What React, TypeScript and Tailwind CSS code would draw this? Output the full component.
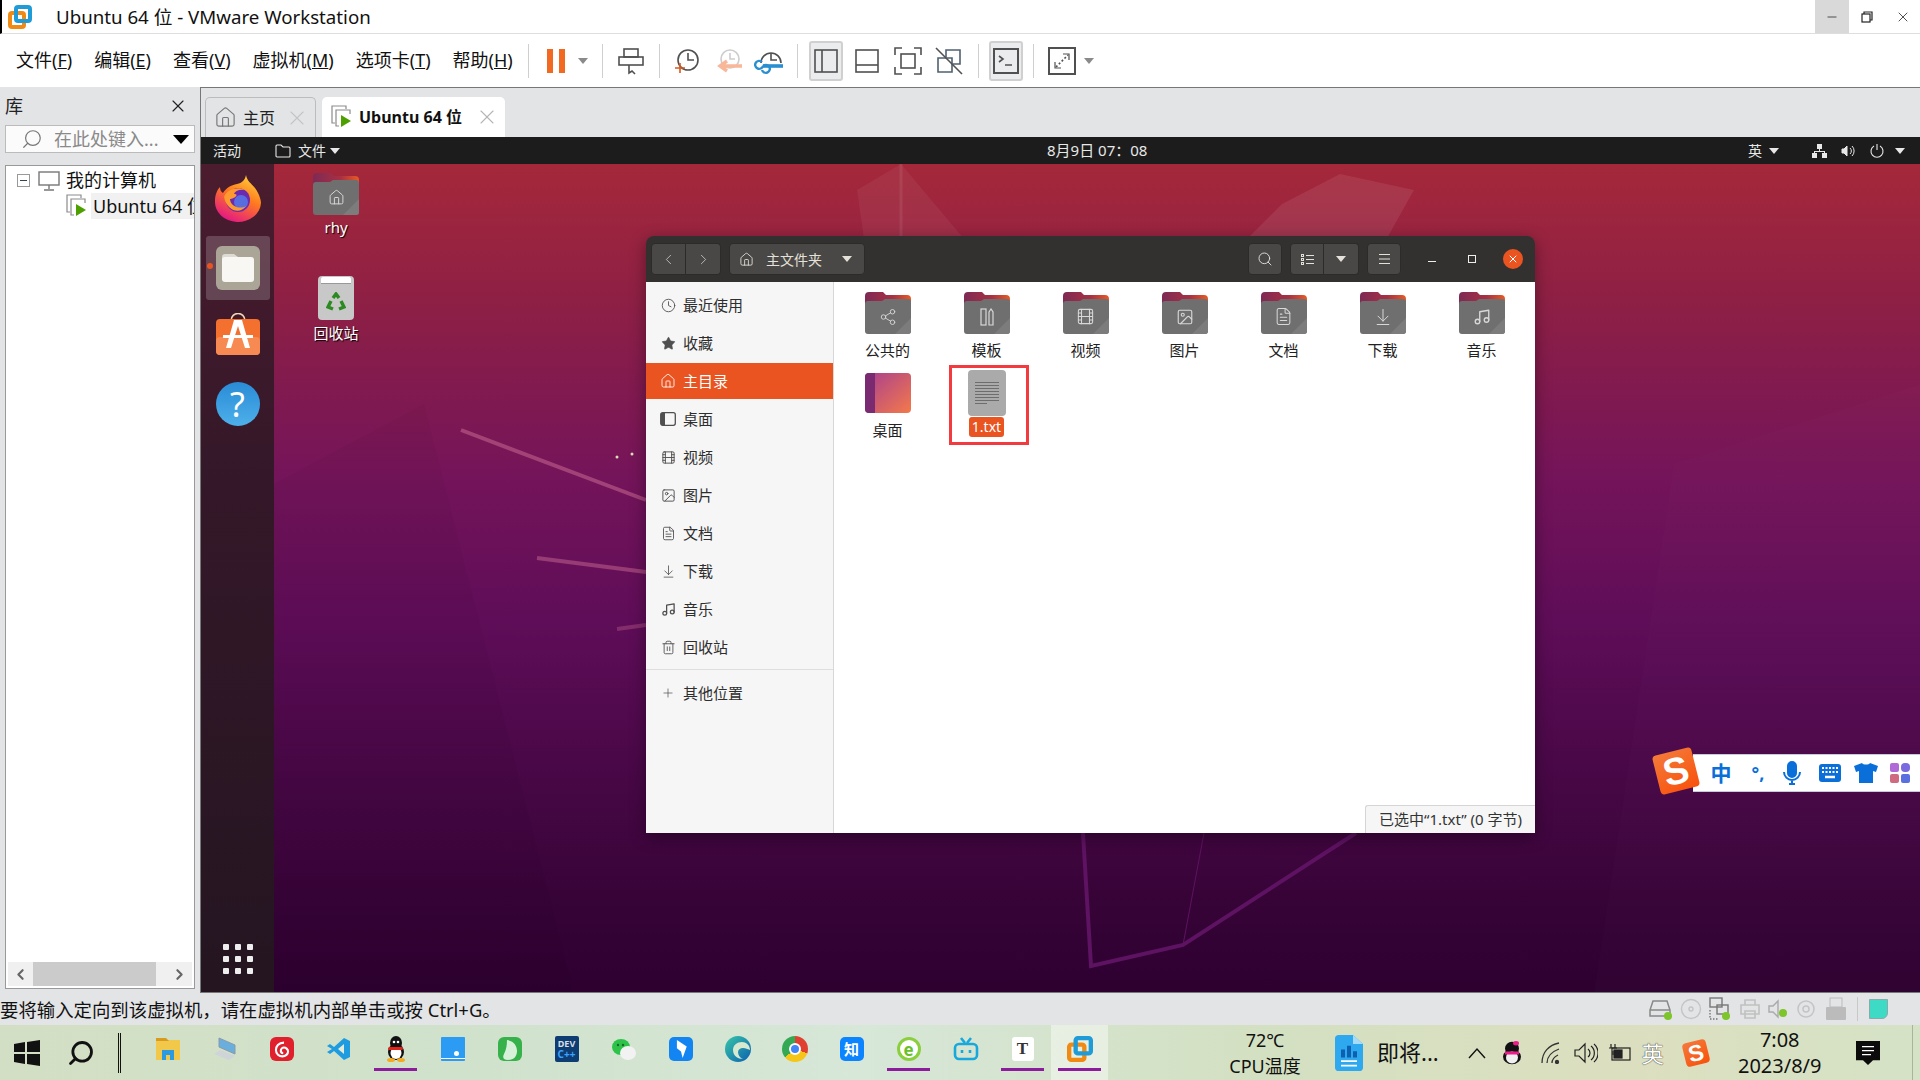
import type { ReactNode } from "react"
import {
  ArrowDownToLine,
  ChevronLeft,
  ChevronRight,
  Clock,
  Film,
  FileText,
  Home,
  Image,
  Minus,
  Music,
  Plus,
  Search,
  Share2,
  Star,
  Trash2,
  X,
} from "lucide-react"

const fontStack = "[font-family:'Noto_Sans','Noto_Sans_CJK_SC',sans-serif]"

const menus = [
  { label: "文件", key: "F" },
  { label: "编辑", key: "E" },
  { label: "查看", key: "V" },
  { label: "虚拟机", key: "M" },
  { label: "选项卡", key: "T" },
  { label: "帮助", key: "H" },
]

const places = [
  { name: "最近使用", icon: <Clock size={15} strokeWidth={1.4} /> },
  { name: "收藏", icon: <Star size={15} fill="currentColor" strokeWidth={1} /> },
  { name: "主目录", icon: <Home size={16} strokeWidth={1.3} />, active: true },
  { name: "桌面", icon: <DesktopGlyph /> },
  { name: "视频", icon: <Film size={15} strokeWidth={1.5} /> },
  { name: "图片", icon: <Image size={15} strokeWidth={1.5} /> },
  { name: "文档", icon: <FileText size={15} strokeWidth={1.4} /> },
  { name: "下载", icon: <ArrowDownToLine size={15} strokeWidth={1.3} /> },
  { name: "音乐", icon: <Music size={15} strokeWidth={2} /> },
  { name: "回收站", icon: <Trash2 size={15} strokeWidth={1.4} /> },
]

const folders = [
  { name: "公共的", icon: <Share2 size={18} strokeWidth={1.2} /> },
  { name: "模板", icon: <TemplateGlyph /> },
  { name: "视频", icon: <Film size={19} strokeWidth={1.3} /> },
  { name: "图片", icon: <Image size={18} strokeWidth={1.5} /> },
  { name: "文档", icon: <FileText size={19} strokeWidth={1.3} /> },
  { name: "下载", icon: <ArrowDownToLine size={20} strokeWidth={1.2} /> },
  { name: "音乐", icon: <Music size={18} strokeWidth={1.8} /> },
]

function DesktopGlyph() {
  return (
    <svg width="16" height="14" viewBox="0 0 16 14">
      <rect x="0.7" y="0.7" width="14.6" height="12.6" rx="2" fill="none" stroke="currentColor" strokeWidth="1.3" />
      <rect x="1" y="1" width="4" height="12" fill="currentColor" />
    </svg>
  )
}

function TemplateGlyph() {
  return (
    <svg width="14" height="18" viewBox="0 0 14 18" fill="none" stroke="currentColor" strokeWidth="1.2">
      <rect x="1" y="1" width="5" height="16" />
      <path d="M9 4l2-3 2 3v13H9z" />
    </svg>
  )
}

function Caret({ className = "" }: { className?: string }) {
  return <div className={`h-0 w-0 border-x-[5px] border-t-[6px] border-x-transparent ${className}`} />
}

function VmwareLogo({ size = 24 }: { size?: number }) {
  return (
    <svg width={size} height={size} viewBox="0 0 24 24" fill="none" strokeWidth="4">
      <rect x="2" y="8" width="14" height="14" rx="2" stroke="#f08a12" />
      <rect x="8" y="2" width="14" height="14" rx="2" stroke="#1f9bd8" />
    </svg>
  )
}

function VmRunningIcon() {
  return (
    <svg width="22" height="24" viewBox="0 0 22 24" fill="none" stroke="#8b8b8b" strokeWidth="1.2">
      <path d="M4 18H1V1h14v3" />
      <path d="M8 21H5V5h14v4" />
      <path d="M10 10l10 6-10 6z" fill="#4ea000" stroke="none" />
    </svg>
  )
}

function ToolIcon({ children, w = 32, h = 32 }: { children: ReactNode; w?: number; h?: number }) {
  return (
    <svg width={w} height={h} viewBox={`0 0 ${w} ${h}`} fill="none" stroke="#505050" strokeWidth="1.6">
      {children}
    </svg>
  )
}

function ToolDivider({ ml }: { ml: string }) {
  return <div className={`h-[34px] w-px bg-[#cfcfcf] ${ml}`} />
}

function TitleBar() {
  return (
    <div className="flex h-[34px] shrink-0 items-center border-b border-l-2 border-[#dedede] border-l-black bg-white">
      <div className="ml-[6px]">
        <VmwareLogo />
      </div>
      <span className="ml-[24px] pt-[1px] text-[18.7px] text-[#111]">Ubuntu 64 位 - VMware Workstation</span>
      <div className="ml-auto flex h-full items-center text-[#222]">
        <div className="flex h-full w-[34px] items-center justify-center bg-[#d9d9d9]">
          <Minus size={14} strokeWidth={1.3} />
        </div>
        <div className="flex h-full w-[36px] items-center justify-center">
          <svg width="12" height="12" viewBox="0 0 12 12" fill="none" stroke="#222" strokeWidth="1.2">
            <rect x="1" y="3" width="8" height="8" />
            <path d="M3 3V1h8v8H9" />
          </svg>
        </div>
        <div className="flex h-full w-[35px] items-center justify-center">
          <X size={16} strokeWidth={1.2} />
        </div>
      </div>
    </div>
  )
}

function Toolbar() {
  return (
    <div className="flex h-[53px] shrink-0 items-center bg-white">
      <div className="flex w-[528px] gap-[22px] pl-[16px] text-[18px] text-[#111]">
        {menus.map((m) => (
          <span key={m.key}>
            {m.label}(<span className="underline">{m.key}</span>)
          </span>
        ))}
      </div>
      <ToolDivider ml="" />
      <div className="ml-[18px] flex h-[24px] w-[18px] justify-between">
        <div className="w-[6px] bg-[#f26a21]" />
        <div className="w-[6px] bg-[#f26a21]" />
      </div>
      <Caret className="ml-[13px] border-t-[#8a8a8a]" />
      <ToolDivider ml="ml-[14px]" />
      <div className="ml-[12px]">
        <ToolIcon>
          <rect x="9" y="4" width="14" height="8" />
          <rect x="4" y="12" width="24" height="8" />
          <path d="M14 20v8l3-2 3 3" />
        </ToolIcon>
      </div>
      <ToolDivider ml="ml-[12px]" />
      <div className="ml-[11px]">
        <ToolIcon>
          <circle cx="17" cy="15" r="10" />
          <path d="M17 8v7h6" />
          <path d="M4 23h10M9 18v10" stroke="#d9581f" />
        </ToolIcon>
      </div>
      <div className="ml-[10px] opacity-90">
        <ToolIcon>
          <circle cx="17" cy="14" r="9" stroke="#c8c8c8" />
          <path d="M17 8v6h5" stroke="#c8c8c8" />
          <path d="M29 21H9m5-5l-7 5 7 5" stroke="#f9b08e" strokeWidth="3.4" />
        </ToolIcon>
      </div>
      <div className="ml-[9px]">
        <ToolIcon>
          <path d="M7 18a10 10 0 1 1 20 0" />
          <path d="M17 8v7h6" />
          <path d="M9 21h20" stroke="#2a8fd0" strokeWidth="3.6" />
          <path d="M9 21a4 4 0 1 1-1-4M9 21a4 4 0 1 1-1 4" stroke="#2a8fd0" strokeWidth="2.4" />
        </ToolIcon>
      </div>
      <ToolDivider ml="ml-[11px]" />
      <div className="ml-[11px] flex h-[40px] w-[34px] items-center justify-center rounded-[3px] border-2 border-[#d0d0d0] bg-[#ebecee]">
        <ToolIcon w={24} h={24}>
          <rect x="1" y="1" width="22" height="22" />
          <path d="M8 1v22" />
        </ToolIcon>
      </div>
      <div className="ml-[12px]">
        <ToolIcon w={24} h={24}>
          <rect x="1" y="1" width="22" height="22" />
          <path d="M1 16h22" />
        </ToolIcon>
      </div>
      <div className="ml-[15px]">
        <ToolIcon w={28} h={28}>
          <path d="M1 8V1h7M20 1h7v7M27 20v7h-7M8 27H1v-7" />
          <rect x="7" y="7" width="14" height="14" />
        </ToolIcon>
      </div>
      <div className="ml-[13px]">
        <ToolIcon w={28} h={28}>
          <path d="M11 10V3h14v14h-7M3 11h14v14H3z" stroke="#506070" />
          <path d="M1 1l26 26" />
        </ToolIcon>
      </div>
      <ToolDivider ml="ml-[15px]" />
      <div className="ml-[10px] flex h-[40px] w-[34px] items-center justify-center rounded-[3px] border-2 border-[#d0d0d0] bg-[#ebecee]">
        <ToolIcon w={26} h={26}>
          <rect x="1" y="1" width="24" height="24" strokeWidth="2" />
          <path d="M6 8l4 3-4 3M12 17h7" />
        </ToolIcon>
      </div>
      <ToolDivider ml="ml-[10px]" />
      <div className="ml-[14px]">
        <ToolIcon w={28} h={28}>
          <rect x="1" y="1" width="26" height="26" strokeWidth="2" />
          <path d="M8 20l12-12" strokeDasharray="2 2" />
          <path d="M15 7h6v6M7 15v6h6" strokeWidth="1.2" />
        </ToolIcon>
      </div>
      <Caret className="ml-[8px] border-t-[#8a8a8a]" />
    </div>
  )
}

function Library() {
  return (
    <div className="flex w-[200px] shrink-0 flex-col px-[5px] pb-[4px]">
      <div className="flex h-[38px] shrink-0 items-center justify-between pr-[7px] text-[18px] text-[#222]">
        <span>库</span>
        <X size={20} strokeWidth={1.4} />
      </div>
      <div className="flex h-[28px] shrink-0 items-center border border-[#bbb] bg-[#fbfbfb]">
        <Search size={22} strokeWidth={1.3} className="ml-[15px] -scale-x-100 text-[#777]" />
        <span className="ml-[11px] whitespace-nowrap text-[18px] text-[#8a8a8a]">在此处键入...</span>
        <Caret className="ml-auto mr-[5px] border-x-[8px] border-t-[9px] border-t-black" />
      </div>
      <div className="mt-[12px] flex flex-1 flex-col border border-[#999] bg-white">
        <div className="flex h-[28px] items-center pl-[11px] pt-[1px]">
          <div className="flex h-[13px] w-[13px] items-center justify-center border border-[#999]">
            <div className="h-px w-[7px] bg-[#345]" />
          </div>
          <svg className="ml-[7px]" width="24" height="22" viewBox="0 0 24 22" fill="none" stroke="#777" strokeWidth="1.4">
            <rect x="2" y="2" width="20" height="13" />
            <path d="M12 15v4M7 20h10" />
          </svg>
          <span className="ml-[5px] text-[18px] text-[#111]">我的计算机</span>
        </div>
        <div className="-mt-[1px] flex h-[26px] items-center pl-[60px]">
          <VmRunningIcon />
          <div className="ml-[3px] flex-1 overflow-hidden whitespace-nowrap bg-[#f1f1f1] pl-[2px] text-[18px] leading-[26px] text-[#111]">
            Ubuntu 64 位
          </div>
        </div>
        <div className="mx-[2px] mb-[2px] mt-auto flex h-[24px] items-center bg-[#f0f0f0]">
          <ChevronLeft size={17} strokeWidth={3} className="ml-[4px] text-[#666]" />
          <div className="ml-[4px] h-full w-[123px] bg-[#cbcbcb]" />
          <ChevronRight size={17} strokeWidth={3} className="ml-[15px] text-[#666]" />
        </div>
      </div>
    </div>
  )
}

function TabsRow() {
  return (
    <div className="flex h-[49px] shrink-0 items-end pl-[4px]">
      <div className="flex h-[40px] w-[111px] items-center rounded-t-[5px] border border-b-0 border-[#bcbcbc] text-[16px] text-[#222]">
        <Home size={23} strokeWidth={1.2} className="ml-[8px] text-[#777]" />
        <span className="ml-[6px]">主页</span>
        <X size={24} strokeWidth={1.1} className="ml-auto mr-[6px] text-[#c4c4c4]" />
      </div>
      <div className="ml-[6px] flex h-[40px] w-[183px] items-center rounded-t-[5px] bg-white text-[16px] font-bold text-[#111]">
        <div className="ml-[9px]">
          <VmRunningIcon />
        </div>
        <span className="ml-[6px]">Ubuntu 64 位</span>
        <X size={24} strokeWidth={1.1} className="ml-auto mr-[6px] text-[#b5b5b5]" />
      </div>
    </div>
  )
}

function GnomeBar() {
  return (
    <div className="flex h-[27px] shrink-0 items-center bg-[#1c1c1c] text-[14px] text-[#e8e8e8]">
      <span className="ml-[12px]">活动</span>
      <svg className="ml-[34px]" width="16" height="14" viewBox="0 0 16 14" fill="none" stroke="#e8e8e8" strokeWidth="1.1">
        <path d="M1 12V2a1 1 0 0 1 1-1h4l2 2h6a1 1 0 0 1 1 1v8a1 1 0 0 1-1 1H2a1 1 0 0 1-1-1z" />
      </svg>
      <span className="ml-[7px]">文件</span>
      <Caret className="ml-[4px] border-t-[#e8e8e8]" />
      <span className="ml-[707px] w-[110px] whitespace-nowrap text-[15px]">8月9日 07：08</span>
      <span className="ml-[591px]">英</span>
      <Caret className="ml-[7px] border-t-[#e8e8e8]" />
      <svg className="ml-[33px]" width="15" height="14" viewBox="0 0 15 14" fill="#e8e8e8">
        <rect x="5" y="0" width="5" height="5" />
        <rect x="0" y="9" width="5" height="5" />
        <rect x="10" y="9" width="5" height="5" />
        <path d="M7 5h1v2h5v2h-1V8H3v1H2V7h5z" />
      </svg>
      <svg className="ml-[14px]" width="14" height="14" viewBox="0 0 14 14" fill="none" stroke="#e8e8e8">
        <path d="M1 5h2l3-3v10l-3-3H1z" fill="#e8e8e8" />
        <path d="M9 4a4 4 0 0 1 0 6M11 2a7 7 0 0 1 0 10" />
      </svg>
      <svg className="ml-[15px]" width="14" height="15" viewBox="0 0 14 15" fill="none" stroke="#e8e8e8" strokeWidth="1.1">
        <path d="M7 1v6M4 3a6 6 0 1 0 6 0" />
      </svg>
      <Caret className="ml-[11px] border-t-[#e8e8e8]" />
    </div>
  )
}

function FirefoxIcon() {
  return (
    <svg width="46" height="48" viewBox="0 0 46 48">
      <defs>
        <linearGradient id="ff" x1="0.8" y1="0" x2="0.3" y2="1">
          <stop offset="0" stopColor="#ffd43a" />
          <stop offset="0.45" stopColor="#ff7a1f" />
          <stop offset="1" stopColor="#e31587" />
        </linearGradient>
      </defs>
      <path d="M31 0c1 6 5 8 9 13 5 7 6 13 6 15a23 20 0 1 1-46-2c0-6 2-11 5-14 0 3 1 5 3 6 3-5 8-8 14-9 5-1 8-4 9-9z" fill="url(#ff)" />
      <circle cx="23" cy="25" r="12" fill="#6b2bb0" />
      <circle cx="26" cy="27" r="7" fill="#5a6de0" />
      <path d="M9 22c3-8 14-11 21-7-6-1-10 1-11 4 6 0 0 5-4 5 0 7 10 11 16 7-6 9-19 5-22-9z" fill="#ff9a2e" />
    </svg>
  )
}

function FilesIcon() {
  return (
    <svg width="44" height="44" viewBox="0 0 44 44">
      <rect width="44" height="44" rx="6" fill="#aaa597" />
      <path d="M6 11a3 3 0 0 1 3-3h9l4 3v6H6z" fill="#dedbd2" />
      <rect x="6" y="11" width="32" height="25" rx="3" fill="#f8f7f4" />
    </svg>
  )
}

function SoftwareIcon() {
  return (
    <svg width="44" height="42" viewBox="0 0 44 42">
      <path d="M15 8c0-10 14-10 14 0" fill="none" stroke="#f0d8b8" strokeWidth="1.6" />
      <rect y="6" width="44" height="36" rx="4" fill="#f4702e" />
      <rect y="24" width="44" height="18" rx="4" fill="#f68a52" />
      <path d="M18 7h8l8 28h-5L22 13l-7 22h-5z" fill="#fff" />
      <rect x="7" y="22" width="30" height="3" fill="#fff" />
    </svg>
  )
}

function Dock() {
  return (
    <div className="flex w-[73px] shrink-0 flex-col items-center bg-[linear-gradient(180deg,#4b1c2e_0%,#351829_35%,#241521_100%)] pt-[11px]">
      <div className="flex h-[61px] items-start">
        <FirefoxIcon />
      </div>
      <div className="relative flex h-[64px] w-[64px] items-center justify-center rounded-[3px] bg-[#ffffff30]">
        <FilesIcon />
        <div className="absolute left-[1px] top-[27px] h-[6px] w-[6px] rounded-full bg-[#e95420]" />
      </div>
      <div className="mt-[13px]">
        <SoftwareIcon />
      </div>
      <div className="mt-[27px] flex h-[44px] w-[44px] items-center justify-center rounded-full bg-[linear-gradient(180deg,#2a8bd6,#4db0ea)] text-[34px] text-white">
        ?
      </div>
      <div className="mb-[18px] mt-auto grid grid-cols-3 gap-[6px]">
        {Array.from({ length: 9 }).map((_, i) => (
          <div key={i} className="h-[6px] w-[6px] rounded-[1px] bg-[#eeeeee]" />
        ))}
      </div>
    </div>
  )
}

function FolderIcon({ children, tint = "text-[#d8d8d8]" }: { children?: ReactNode; tint?: string }) {
  return (
    <div className={`relative h-[42px] w-[46px] ${tint}`}>
      <svg width="46" height="42" viewBox="0 0 46 42" className="absolute left-0 top-0">
        <defs>
          <linearGradient id="tab" x1="0" y1="0" x2="1" y2="0">
            <stop offset="0" stopColor="#7d2a55" />
            <stop offset="0.6" stopColor="#a83043" />
            <stop offset="1" stopColor="#e85a24" />
          </linearGradient>
        </defs>
        <path d="M0 14V4a4 4 0 0 1 4-4h14l3 3h21a4 4 0 0 1 4 4v10z" fill="url(#tab)" />
        <path d="M0 12a3 3 0 0 1 3-3h14l3-2h23a3 3 0 0 1 3 3v29a3 3 0 0 1-3 3H3a3 3 0 0 1-3-3z" fill="#6f6f6f" />
        <path d="M46 26v13a3 3 0 0 1-3 3H30z" fill="#7c7c7c" />
      </svg>
      <div className="absolute inset-x-0 bottom-0 top-[7px] flex items-center justify-center">{children}</div>
    </div>
  )
}

function DesktopFolderIcon() {
  return (
    <svg width="46" height="42" viewBox="0 0 46 42">
      <defs>
        <linearGradient id="desk" x1="0" y1="0" x2="1" y2="1">
          <stop offset="0" stopColor="#a83f8f" />
          <stop offset="1" stopColor="#f4794a" />
        </linearGradient>
      </defs>
      <rect y="1" width="46" height="40" rx="4" fill="url(#desk)" />
      <path d="M4 1h6v40H4a4 4 0 0 1-4-4V5a4 4 0 0 1 4-4z" fill="#7a2a70" />
    </svg>
  )
}

function TextFileIcon() {
  return (
    <div className="-mt-[2px] flex h-[46px] w-[38px] flex-col items-center justify-center gap-[2px] rounded-[4px] bg-[#aaaaaa]">
      {[24, 24, 24, 24, 24, 24, 24, 12].map((w, i) => (
        <div key={i} className={`h-px w-[24px] bg-[#6d6d6d] ${w === 12 ? "mr-[12px] !w-[12px]" : ""}`} />
      ))}
    </div>
  )
}

function HeaderButton({ children, className = "" }: { children: ReactNode; className?: string }) {
  return (
    <div className={`flex h-[32px] items-center justify-center border border-[#2c2b2a] bg-[#4a4846] text-[#e4e1da] ${className}`}>
      {children}
    </div>
  )
}

function FilesWindow() {
  return (
    <div className="absolute left-[372px] top-[72px] flex h-[597px] w-[889px] flex-col overflow-hidden rounded-t-[8px] shadow-[0_4px_16px_#00000060]">
      <div className="flex h-[46px] shrink-0 items-center bg-[#333130] pl-[5px] text-[#e4e1da]">
        <HeaderButton className="w-[35px] rounded-l-[4px] text-[#8c8a87]">
          <ChevronLeft size={17} strokeWidth={1} />
        </HeaderButton>
        <HeaderButton className="w-[35px] rounded-r-[4px] border-l-0 text-[#8c8a87]">
          <ChevronRight size={17} strokeWidth={1} />
        </HeaderButton>
        <HeaderButton className="ml-[8px] w-[136px] justify-start rounded-[4px] text-[14px]">
          <Home size={15} strokeWidth={1.4} className="ml-[9px]" />
          <span className="ml-[12px]">主文件夹</span>
          <Caret className="ml-[20px] border-t-[#e4e1da]" />
        </HeaderButton>
        <HeaderButton className="ml-[383px] w-[34px] rounded-[4px]">
          <Search size={16} strokeWidth={1.4} />
        </HeaderButton>
        <HeaderButton className="ml-[8px] w-[34px] rounded-l-[4px]">
          <svg width="13" height="11" viewBox="0 0 13 11" fill="none" stroke="#e4e1da">
            <path d="M5 1.5h8M5 5.5h8M5 9.5h8" />
            <rect x="0.5" y="0.5" width="2" height="2" />
            <rect x="0.5" y="4.5" width="2" height="2" />
            <rect x="0.5" y="8.5" width="2" height="2" />
          </svg>
        </HeaderButton>
        <HeaderButton className="w-[35px] rounded-r-[4px] border-l-0">
          <Caret className="border-t-[#e4e1da]" />
        </HeaderButton>
        <HeaderButton className="ml-[8px] w-[34px] rounded-[4px]">
          <svg width="11" height="10" viewBox="0 0 11 10" stroke="#e4e1da">
            <path d="M0 0.5h11M0 5h11M0 9.5h11" />
          </svg>
        </HeaderButton>
        <div className="ml-[27px] mt-[5px] h-px w-[8px] bg-[#eee]" />
        <div className="ml-[32px] h-[8px] w-[8px] border border-[#eee]" />
        <div className="ml-[27px] flex h-[20px] w-[20px] items-center justify-center rounded-full bg-[#e95420] text-white">
          <X size={12} strokeWidth={2} />
        </div>
      </div>
      <div className="relative flex min-h-0 flex-1 bg-white">
        <div className="flex w-[188px] shrink-0 flex-col border-r border-[#d8d8d8] bg-[#f6f6f6] pt-[4px] text-[15px] text-[#2e2e2e]">
          {places.map((p) => (
            <div key={p.name} className="h-[38px] py-px">
              <div className={`flex h-[36px] items-center ${p.active ? "bg-[#e95420] text-white" : ""}`}>
                <div className={`flex w-[37px] justify-center pl-[7px] ${p.active ? "" : "text-[#4f4f4f]"}`}>{p.icon}</div>
                <span>{p.name}</span>
              </div>
            </div>
          ))}
          <div className="mt-[3px] flex h-[43px] items-center border-t border-[#dedede] pt-[4px]">
            <div className="flex w-[37px] justify-center pl-[7px] text-[#4f4f4f]">
              <Plus size={14} strokeWidth={1.2} />
            </div>
            <span>其他位置</span>
          </div>
        </div>
        <div className="grid flex-1 grid-cols-[repeat(7,99px)] content-start pl-[4px] pt-[10px] text-[15px] text-[#222]">
          {folders.map((f) => (
            <div key={f.name} className="flex h-[80px] flex-col items-center">
              <FolderIcon>{f.icon}</FolderIcon>
              <span className="mt-[6px] leading-[20px]">{f.name}</span>
            </div>
          ))}
          <div className="flex h-[80px] flex-col items-center">
            <DesktopFolderIcon />
            <span className="mt-[6px] leading-[20px]">桌面</span>
          </div>
          <div className="relative flex h-[80px] flex-col items-center">
            <TextFileIcon />
            <span className="mt-[1px] rounded-[3px] bg-[#e95420] px-[3px] text-[14px] leading-[20px] text-white">1.txt</span>
            <div className="absolute left-[12px] top-[-7px] h-[80px] w-[80px] border-[3px] border-[#f33a3f]" />
          </div>
        </div>
        <div className="absolute bottom-0 right-0 flex h-[28px] w-[170px] items-center justify-center whitespace-nowrap rounded-tl-[3px] border-l border-t border-[#d5d5d5] bg-[#f6f6f6] text-[15px] text-[#333]">
          已选中“1.txt” (0 字节)
        </div>
      </div>
    </div>
  )
}

function WallpaperArt() {
  return (
    <svg className="absolute inset-0" width="1647" height="830" viewBox="0 0 1647 830" fill="none">
      <path d="M583 26L627 0 690 75H590z" fill="#ffffff0d" />
      <path d="M627 0v75" stroke="#ffffff14" strokeWidth="3" />
      <path d="M1066 10l74 16-28 50H972l36-36z" fill="#ffffff14" />
      <path d="M0 320L150 240 300 830H0z" fill="#00000008" />
      <path d="M1400 300l247-80v610H1320z" fill="#ffffff03" />
      <path d="M187 266L372 336" stroke="#c0608c" strokeOpacity="0.6" strokeWidth="4" />
      <path d="M263 394L372 408" stroke="#c0608c" strokeOpacity="0.55" strokeWidth="4" />
      <path d="M343 465L372 461" stroke="#c0608c" strokeOpacity="0.4" strokeWidth="4" />
      <circle cx="343" cy="293" r="1.5" fill="#ddb" />
      <circle cx="358" cy="290" r="1.5" fill="#ddb" />
      <path d="M809 669l8 133 92-21L1082 669" stroke="#5e1262" strokeWidth="4" />
      <path d="M930 669l-21 112" stroke="#5e1262" strokeWidth="1" />
    </svg>
  )
}

function DesktopIcons() {
  return (
    <div className="absolute left-[29px] top-[9px] flex w-[66px] flex-col items-center text-[15px] text-white [text-shadow:1px_1px_1px_#000]">
      <FolderIcon>
        <Home size={17} strokeWidth={1.4} />
      </FolderIcon>
      <span className="mt-[2px] leading-[20px]">rhy</span>
      <div className="relative mt-[39px] flex h-[44px] w-[36px] items-center justify-center rounded-[4px] bg-[#c8c8c8]">
        <div className="absolute inset-x-[3px] top-[1px] h-[7px] rounded-t-[2px] border-b border-[#999] bg-white" />
        <svg width="20" height="20" viewBox="0 0 20 20" fill="none" stroke="#2c8a22" strokeWidth="3.4" className="mt-[8px]">
          <path d="M7 6l3-4 3 4M15 9l3 6-5 2M5 9l-3 6 5 2" />
        </svg>
      </div>
      <span className="mt-[3px] leading-[20px]">回收站</span>
    </div>
  )
}

function SogouLogo({ size }: { size: number }) {
  return (
    <div
      className="flex rotate-[-14deg] items-center justify-center rounded-[4px] bg-[linear-gradient(160deg,#f47a3a,#f8510c)] font-bold text-white [font-family:'Liberation_Sans',sans-serif]"
      style={{ width: size, height: size, fontSize: size * 0.95 }}
    >
      S
    </div>
  )
}

function SogouBar() {
  const blue = "#0a6fd8"
  return (
    <div className="absolute bottom-[200px] right-0 flex h-[38px] w-[227px] items-center border-y border-[#c6cce0] bg-white">
      <div className="absolute -left-[37px] top-[-4px]">
        <SogouLogo size={40} />
      </div>
      <span className="ml-[17px] w-[22px] text-center text-[21px] font-bold leading-none text-[#0a6fd8]">中</span>
      <span className="ml-[15px] w-[22px] text-center text-[18px] font-bold leading-none text-[#0a6fd8]">°,</span>
      <svg className="ml-[13px]" width="20" height="24" viewBox="0 0 20 24" fill="none" stroke={blue} strokeWidth="2">
        <rect x="6" y="1" width="8" height="15" rx="4" fill={blue} />
        <path d="M2 11a8 8 0 0 0 16 0M10 19v3M7 23h6" />
      </svg>
      <svg className="ml-[17px]" width="22" height="18" viewBox="0 0 22 18">
        <rect width="22" height="18" rx="3" fill={blue} />
        <path d="M3 4h16M3 8h16" stroke="#fff" strokeWidth="2" strokeDasharray="2 1.5" />
        <path d="M6 13h10" stroke="#fff" strokeWidth="2.5" />
      </svg>
      <svg className="ml-[13px]" width="24" height="20" viewBox="0 0 24 20" fill={blue}>
        <path d="M8 0c1 2 7 2 8 0l8 3-2 6-3-1v12H5V8L2 9 0 3z" />
      </svg>
      <svg className="ml-[12px]" width="20" height="20" viewBox="0 0 20 20">
        <rect width="9" height="9" rx="2" fill="#b06ad8" />
        <rect x="11" width="9" height="9" rx="4" fill="#7a6ae0" />
        <rect y="11" width="9" height="9" rx="2" fill="#d06a80" />
        <rect x="11" y="11" width="9" height="9" rx="2" fill="#5a70e0" />
      </svg>
    </div>
  )
}

function VmPane() {
  return (
    <div className="flex min-w-0 flex-1 flex-col border-b border-l border-t border-[#777]">
      <TabsRow />
      <GnomeBar />
      <div className="flex min-h-0 flex-1">
        <Dock />
        <div className="relative flex-1 overflow-hidden bg-[linear-gradient(180deg,#a5283a_0%,#8c1f46_18%,#74145a_38%,#5f0d58_55%,#4a0848_72%,#380438_88%,#2d0030_100%)]">
          <WallpaperArt />
          <DesktopIcons />
          <FilesWindow />
          <SogouBar />
        </div>
      </div>
    </div>
  )
}

function StatusBar() {
  return (
    <div className="flex h-[32px] shrink-0 items-center text-[18.4px] text-[#111]">
      <span className="pt-[1px]">要将输入定向到该虚拟机，请在虚拟机内部单击或按 Ctrl+G。</span>
      <div className="ml-auto flex items-center">
        <svg width="24" height="22" viewBox="0 0 24 22" fill="none" stroke="#888" strokeWidth="1.5">
          <path d="M1 18V12L4 3h14l3 9v6zM1 12h20" />
          <circle cx="19" cy="18" r="4" fill="#7dc52a" stroke="none" />
        </svg>
        <svg className="ml-[7px]" width="22" height="22" viewBox="0 0 22 22" fill="none" stroke="#c4c4c4" strokeWidth="1.4">
          <circle cx="11" cy="11" r="9.5" />
          <circle cx="11" cy="11" r="2" />
        </svg>
        <svg className="ml-[7px]" width="22" height="24" viewBox="0 0 22 24" fill="none" stroke="#777" strokeWidth="1.4">
          <rect x="1" y="1" width="12" height="9" />
          <rect x="8" y="8" width="11" height="9" />
          <path d="M1 13v9h9" strokeDasharray="1.5 1.5" />
          <circle cx="17" cy="19" r="4" fill="#7dc52a" stroke="none" />
        </svg>
        <svg className="ml-[8px]" width="22" height="22" viewBox="0 0 22 22" fill="none" stroke="#c0c0c0" strokeWidth="1.6">
          <path d="M6 7V2h10v5M2 7h18v9H2zM6 13h10v7H6z" />
        </svg>
        <svg className="ml-[7px]" width="20" height="22" viewBox="0 0 20 22" fill="none" stroke="#aaa" strokeWidth="1.4">
          <path d="M1 8h4l5-5v16l-5-5H1z" />
          <circle cx="15" cy="15" r="4" fill="#7dc52a" stroke="none" />
        </svg>
        <svg className="ml-[9px]" width="18" height="22" viewBox="0 0 18 22" fill="none" stroke="#c4c4c4" strokeWidth="1.5">
          <circle cx="9" cy="11" r="8" />
          <circle cx="9" cy="11" r="3" />
        </svg>
        <svg className="ml-[10px]" width="22" height="24" viewBox="0 0 22 24">
          <rect x="5" y="1" width="12" height="9" fill="none" stroke="#bbb" />
          <rect x="1" y="10" width="20" height="13" rx="1" fill="#bbb" />
        </svg>
        <div className="ml-[10px] h-[24px] w-px bg-[#c8c8c8]" />
        <div className="ml-[11px] mr-[32px] h-[20px] w-[19px] rounded-br-[6px] border border-[#8aa] bg-[#3ddbc6]" />
      </div>
    </div>
  )
}

function TaskIcon({ children, mark, active }: { children: ReactNode; mark?: boolean; active?: boolean }) {
  return (
    <div className={`relative flex h-full w-[57px] items-center justify-center pb-[7px] ${active ? "bg-[#ffffff70]" : ""}`}>
      {children}
      {mark && <div className="absolute bottom-[9px] left-[7px] h-[3px] w-[43px] bg-[#8c1c9c]" />}
    </div>
  )
}

function TaskbarApps() {
  return (
    <div className="flex h-full items-center">
      <TaskIcon>
        <svg width="24" height="24" viewBox="0 0 24 24">
          <path d="M0 3h24v20H0z" fill="#f2c84b" />
          <path d="M0 1h10l3 3H0z" fill="#d99a20" />
          <path d="M6 13h12v10h-4v-5h-4v5H6z" fill="#2b9ae0" />
        </svg>
      </TaskIcon>
      <TaskIcon>
        <svg width="24" height="24" viewBox="0 0 24 24">
          <path d="M6 1l16 7v9L6 10z" fill="#6aaede" stroke="#8a9aa8" />
          <path d="M1 17l6-4 15 6-6 4z" fill="#cfd4d8" />
        </svg>
      </TaskIcon>
      <TaskIcon>
        <div className="flex h-[24px] w-[24px] items-center justify-center rounded-[6px] bg-[#e0202c]">
          <svg width="16" height="17" viewBox="0 0 19 21" fill="none" stroke="#fff" strokeWidth="2.6">
            <path d="M12 2C5 2 2 7 2 11c0 5 4 8 8 8s7-3 7-6-3-5-5-5-4 2-4 4 1 3 3 3" />
          </svg>
        </div>
      </TaskIcon>
      <TaskIcon>
        <svg width="24" height="24" viewBox="0 0 24 24">
          <path d="M17 1l6 3v16l-6 3L7 14l-4 3-3-2 5-3-5-3 3-2 4 3z" fill="#1f9ce0" />
          <path d="M17 7v10l-6-5z" fill="#e4ecd8" />
        </svg>
      </TaskIcon>
      <TaskIcon mark>
        <svg width="22" height="26" viewBox="0 0 22 26">
          <ellipse cx="11" cy="7" rx="6" ry="7" fill="#111" />
          <ellipse cx="11" cy="16" rx="8" ry="8" fill="#111" />
          <ellipse cx="11" cy="17" rx="5.5" ry="6" fill="#fff" />
          <rect x="3" y="11" width="15" height="3" rx="1.5" fill="#e2231a" />
          <circle cx="9" cy="6" r="1.3" fill="#fff" />
          <circle cx="13" cy="6" r="1.3" fill="#fff" />
          <ellipse cx="6" cy="24" rx="4" ry="2" fill="#f4a91f" />
          <ellipse cx="16" cy="24" rx="4" ry="2" fill="#f4a91f" />
        </svg>
      </TaskIcon>
      <TaskIcon>
        <div className="relative h-[24px] w-[24px] rounded-[1px] bg-[#2b9bf4]">
          <div className="absolute bottom-[5px] right-[6px] h-[5px] w-[5px] rounded-full bg-white" />
          <div className="absolute inset-x-0 bottom-[2px] h-px bg-white" />
        </div>
      </TaskIcon>
      <TaskIcon>
        <svg width="24" height="24" viewBox="0 0 24 24">
          <rect width="24" height="24" rx="6" fill="#37b24a" />
          <path d="M9 3c7 1 10 6 10 11s-3 9-9 9c-4 0-6-2-4-6s3-8 3-14z" fill="#d7f1d8" />
        </svg>
      </TaskIcon>
      <TaskIcon>
        <div className="flex h-[26px] w-[24px] flex-col items-center justify-center rounded-[2px] bg-[#0e3d73] font-bold leading-[11px]">
          <span className="text-[9px] text-[#d9dde4]">DEV</span>
          <span className="text-[10px] text-[#3aa3ff]">C++</span>
        </div>
      </TaskIcon>
      <TaskIcon>
        <svg width="24" height="24" viewBox="0 0 24 24">
          <ellipse cx="9" cy="10" rx="9" ry="8" fill="#2dc24a" />
          <ellipse cx="16" cy="16" rx="8" ry="7" fill="#f2f2f2" />
          <circle cx="6" cy="8" r="1.2" fill="#176b28" />
          <circle cx="11" cy="8" r="1.2" fill="#176b28" />
        </svg>
      </TaskIcon>
      <TaskIcon>
        <div className="flex h-[24px] w-[24px] items-center justify-center rounded-[5px] bg-[#1285f2]">
          <svg width="14" height="18" viewBox="0 0 14 22" fill="#fff">
            <path d="M2 0l12 8-5 14-2-8-5-4z" />
          </svg>
        </div>
      </TaskIcon>
      <TaskIcon>
        <svg width="26" height="26" viewBox="0 0 26 26">
          <defs>
            <linearGradient id="edge" x1="0" y1="0" x2="1" y2="1">
              <stop offset="0" stopColor="#37c6a8" />
              <stop offset="1" stopColor="#0c5fb0" />
            </linearGradient>
          </defs>
          <circle cx="13" cy="13" r="13" fill="url(#edge)" />
          <path d="M25 14c0-5-4-8-8-8-5 0-9 3-9 8 0 6 5 9 10 9-3-1-5-4-5-7 0-2 2-4 5-4s4 1 7 2z" fill="#d6e8d0" />
        </svg>
      </TaskIcon>
      <TaskIcon>
        <div className="flex h-[26px] w-[26px] items-center justify-center rounded-full bg-[conic-gradient(#e0402f_0deg,#e0402f_110deg,#f5c518_110deg,#f5c518_230deg,#34a853_230deg,#34a853_360deg)]">
          <div className="h-[12px] w-[12px] rounded-full border-2 border-white bg-[#4285f4]" />
        </div>
      </TaskIcon>
      <TaskIcon>
        <div className="flex h-[24px] w-[24px] items-center justify-center rounded-[5px] bg-[#0b84ff] text-[15px] font-bold text-white">知</div>
      </TaskIcon>
      <TaskIcon mark>
        <div className="flex h-[24px] w-[24px] items-center justify-center rounded-full border-[3px] border-[#8ccf3e] bg-white text-[17px] font-bold leading-none text-[#6abf2a]">
          e
        </div>
      </TaskIcon>
      <TaskIcon>
        <svg width="26" height="24" viewBox="0 0 26 24" fill="none" stroke="#18a9dc" strokeWidth="2.6">
          <rect x="2" y="7" width="22" height="15" rx="4" />
          <path d="M8 1l4 5M18 1l-4 5M9 13v3M17 13v3" />
        </svg>
      </TaskIcon>
      <TaskIcon mark>
        <div className="flex h-[24px] w-[22px] items-center justify-center rounded-[3px] bg-white text-[17px] font-bold text-[#333] [font-family:'Liberation_Serif',serif]">
          T
        </div>
      </TaskIcon>
      <TaskIcon mark active>
        <VmwareLogo size={26} />
      </TaskIcon>
    </div>
  )
}

function Taskbar() {
  return (
    <div className="flex h-[55px] shrink-0 items-center bg-[linear-gradient(90deg,#d3dfc4_0%,#d0e2cc_25%,#d7e7d8_45%,#d3e0c2_65%,#dcdfbf_85%,#d5e2c6_100%)] text-[#111]">
      <div className="flex w-[54px] justify-center">
        <svg width="26" height="26" viewBox="0 0 26 26" fill="#111">
          <path d="M0 4l11-2v10H0zM13 2l13-2v12H13zM0 14h11v10L0 22zM13 14h13v12l-13-2z" />
        </svg>
      </div>
      <div className="flex w-[54px] justify-center">
        <Search size={28} strokeWidth={2.4} className="-scale-x-100" />
      </div>
      <div className="ml-[10px] h-[40px] w-[3px] border-x border-[#111]" />
      <div className="ml-[18px] h-full">
        <TaskbarApps />
      </div>
      <div className="ml-[112px] flex w-[90px] flex-col items-center text-[18px] leading-[26px]">
        <span>72℃</span>
        <span>CPU温度</span>
      </div>
      <svg className="ml-[25px]" width="28" height="36" viewBox="0 0 28 40" preserveAspectRatio="none">
        <path d="M4 0h14l10 10v26a4 4 0 0 1-4 4H4a4 4 0 0 1-4-4V4a4 4 0 0 1 4-4z" fill="#2ea8ee" />
        <path d="M18 0l10 10H18z" fill="#a6dcf8" />
        <path d="M6 16h4v9H6zM12 12h4v13h-4zM18 18h4v7h-4z" fill="#0d5fb0" />
        <path d="M6 29h16M6 34h16" stroke="#fff" strokeWidth="2" />
      </svg>
      <span className="ml-[14px] text-[22px]">即将...</span>
      <svg className="ml-[28px]" width="20" height="12" viewBox="0 0 20 12" fill="none" stroke="#111" strokeWidth="1.4">
        <path d="M2 11l8-9 8 9" />
      </svg>
      <svg className="ml-[15px]" width="20" height="24" viewBox="0 0 20 32" preserveAspectRatio="none">
        <ellipse cx="10" cy="10" rx="7" ry="9" fill="#111" />
        <ellipse cx="10" cy="21" rx="9" ry="10" fill="#111" />
        <ellipse cx="10" cy="22" rx="6" ry="8" fill="#f0f0f0" />
        <path d="M3 14h14v4H3z" fill="#ee1b8a" />
        <circle cx="14" cy="3" r="3" fill="#ee1b8a" />
      </svg>
      <svg className="ml-[19px]" width="20" height="22" viewBox="0 0 20 22" fill="none" stroke="#333" strokeWidth="1.3">
        <path d="M1 21C1 10 8 3 18 1M6 21c0-7 4-11 12-14M11 21c0-3 2-6 6-8" />
        <circle cx="16" cy="20" r="1.5" fill="#333" />
      </svg>
      <svg className="ml-[13px]" width="24" height="22" viewBox="0 0 24 22" fill="none" stroke="#222" strokeWidth="1.2">
        <path d="M1 8h4l6-6v18l-6-6H1zM14 7a5 5 0 0 1 0 8M17 4a9 9 0 0 1 0 14M20 2a12 12 0 0 1 0 18" />
      </svg>
      <svg className="ml-[9px]" width="24" height="20" viewBox="0 0 24 20" fill="none" stroke="#222" strokeWidth="1.2">
        <rect x="5" y="5" width="18" height="12" />
        <rect x="7" y="7" width="8" height="8" fill="#222" />
        <path d="M4 1v4M8 1v4M2 5h8M6 8v4" />
      </svg>
      <span className="ml-[11px] text-[22px] leading-none text-white [text-shadow:0_0_1px_#333,0_0_1px_#333]">英</span>
      <div className="ml-[20px]">
        <SogouLogo size={24} />
      </div>
      <div className="ml-[20px] flex w-[104px] flex-col items-center text-[20px] leading-[26px]">
        <span>7:08</span>
        <span>2023/8/9</span>
      </div>
      <svg className="ml-[24px]" width="24" height="24" viewBox="0 0 24 30" preserveAspectRatio="none">
        <path d="M0 0h24v24h-7l-5 6-5-6H0z" fill="#0b0b0b" />
        <path d="M6 7h12M6 12h12M6 17h9" stroke="#fff" strokeWidth="1.5" />
      </svg>
      <div className="ml-auto h-full w-px bg-[#a9b39e]" />
      <div className="w-[7px]" />
    </div>
  )
}

export default function App() {
  return (
    <div className={`flex h-[1080px] w-[1920px] flex-col overflow-hidden bg-[#e3e4e6] ${fontStack}`}>
      <TitleBar />
      <Toolbar />
      <div className="flex h-[906px] shrink-0">
        <Library />
        <VmPane />
      </div>
      <StatusBar />
      <Taskbar />
    </div>
  )
}
